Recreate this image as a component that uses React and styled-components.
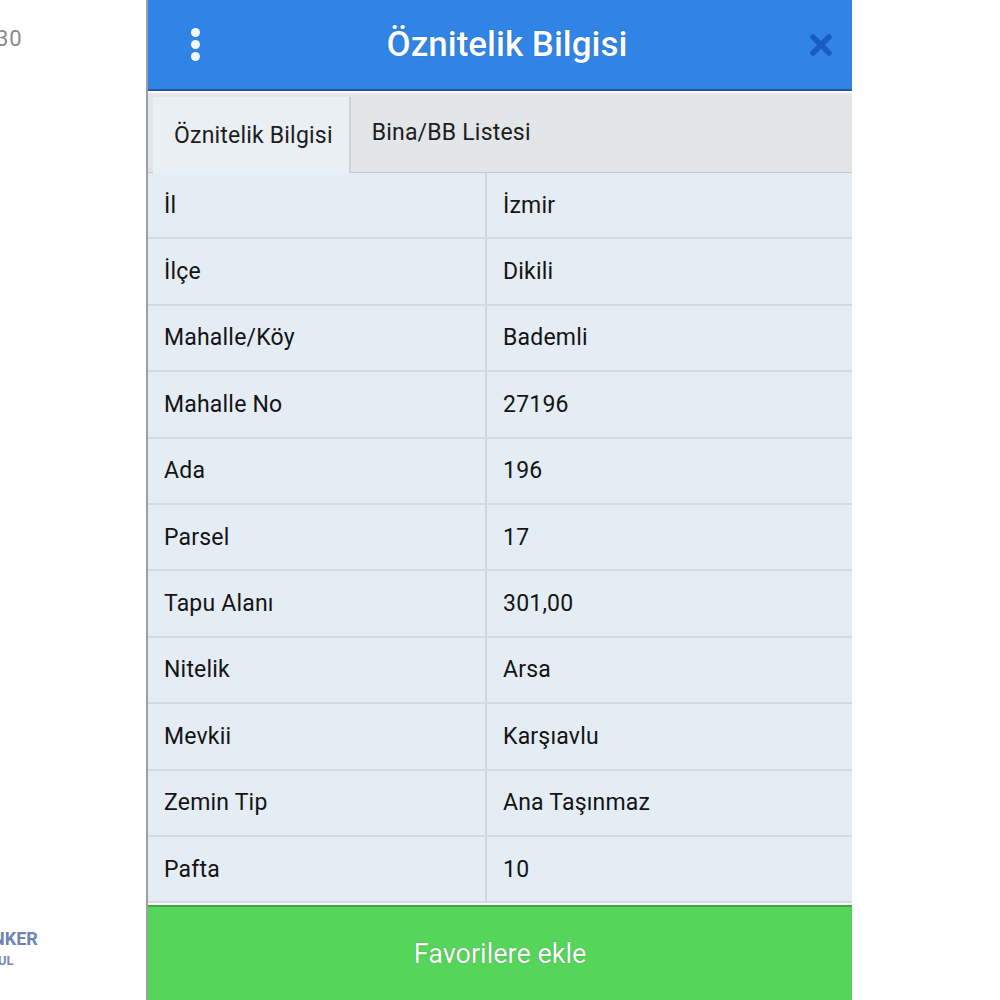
import React from "react";
import styled, { createGlobalStyle } from "styled-components";

const rows = [
  ["İl", "İzmir"],
  ["İlçe", "Dikili"],
  ["Mahalle/Köy", "Bademli"],
  ["Mahalle No", "27196"],
  ["Ada", "196"],
  ["Parsel", "17"],
  ["Tapu Alanı", "301,00"],
  ["Nitelik", "Arsa"],
  ["Mevkii", "Karşıavlu"],
  ["Zemin Tip", "Ana Taşınmaz"],
  ["Pafta", "10"],
];

function App() {
  return (
    <>
      <GlobalStyle />
      <Page>
        <Side>
          <SideTop>30</SideTop>
          <SideBottom>
            <SideBrand>NKER</SideBrand>
            <SideSub>UL</SideSub>
          </SideBottom>
        </Side>

        <Panel>
          <Header>
            <MenuDots>
              <span />
              <span />
              <span />
            </MenuDots>
            <Title>Öznitelik Bilgisi</Title>
            <Close>
              <svg width="26" height="26" viewBox="0 0 26 26">
                <path
                  d="M5 5 L21 21 M21 5 L5 21"
                  stroke="#1b5cc0"
                  strokeWidth="5.5"
                  strokeLinecap="round"
                />
              </svg>
            </Close>
          </Header>

          <Tabs>
            <Tab active>Öznitelik Bilgisi</Tab>
            <Tab>Bina/BB Listesi</Tab>
          </Tabs>

          <Table>
            {rows.map(([label, value]) => (
              <Row key={label}>
                <Cell>{label}</Cell>
                <Cell divider>{value}</Cell>
              </Row>
            ))}
          </Table>

          <FavButton>Favorilere ekle</FavButton>
        </Panel>

        <Rest />
      </Page>
    </>
  );
}

export default App;

const GlobalStyle = createGlobalStyle`
  html, body {
    margin: 0;
    padding: 0;
    background: #fff;
  }
  body {
    font-family: Roboto, "Noto Sans", "Liberation Sans", sans-serif;
  }
`;

const Page = styled.div`
  display: flex;
  width: 1000px;
  height: 1000px;
  overflow: hidden;
`;

const Side = styled.div`
  width: 146px;
  display: flex;
  flex-direction: column;
  justify-content: space-between;
`;

const SideTop = styled.div`
  margin-top: 26px;
  margin-left: -4px;
  font-size: 22px;
  color: #8a8a8a;
  letter-spacing: 1px;
`;

const SideBottom = styled.div`
  margin-bottom: 32px;
  margin-left: -8px;
  display: flex;
  flex-direction: column;
  gap: 4px;
`;

const SideBrand = styled.div`
  font-size: 18px;
  font-weight: 700;
  color: #7183b0;
`;

const SideSub = styled.div`
  font-size: 13px;
  font-weight: 700;
  color: #7a89b3;
  margin-left: 6px;
`;

const Panel = styled.div`
  width: 704px;
  display: flex;
  flex-direction: column;
  border-left: 2px solid #9aa0a6;
  background: #fff;
`;

const Header = styled.div`
  height: 89px;
  background: #2f84e6;
  border-bottom: 2px solid #1f58a6;
  display: flex;
  align-items: center;
  padding: 0 18px 0 40px;
  margin-bottom: 2px;
`;

const MenuDots = styled.div`
  width: 14px;
  display: flex;
  flex-direction: column;
  align-items: center;
  gap: 3px;

  span {
    width: 9px;
    height: 9px;
    border-radius: 50%;
    background: #f2f7ff;
  }
`;

const Title = styled.div`
  flex: 1;
  text-align: center;
  color: #fff;
  font-size: 35px;
  font-weight: 500;
  padding-left: 4px;
  text-shadow: 0 0 1px rgba(0, 0, 0, 0.4);
`;

const Close = styled.div`
  width: 26px;
  height: 26px;
`;

const Tabs = styled.div`
  height: 79px;
  background: #e2e6e9;
  border-bottom: 1px solid #c4c9cd;
  display: flex;
  align-items: flex-end;
  padding-left: 5px;
`;

const Tab = styled.div`
  height: ${(p) => (p.active ? "76px" : "79px")};
  display: flex;
  align-items: center;
  padding: 0 ${(p) => (p.active ? "16px" : "20px")} 0 21px;
  font-size: 23px;
  letter-spacing: 0.2px;
  color: #1d1d1d;
  background: ${(p) => (p.active ? "#e9eff3" : "transparent")};
  border-right: ${(p) => (p.active ? "2px solid #cdd2d6" : "none")};
  margin-bottom: ${(p) => (p.active ? "-1px" : "0")};
`;

const Table = styled.div`
  display: flex;
  flex-direction: column;
  background: #e5edf4;
`;

const Row = styled.div`
  height: 66.4px;
  box-sizing: border-box;
  display: grid;
  grid-template-columns: 337px 1fr;
  border-bottom: 2px solid #d3dae0;
`;

const Cell = styled.div`
  display: flex;
  align-items: center;
  padding-left: 16px;
  font-size: 23px;
  letter-spacing: 0.2px;
  color: #141414;
  border-left: ${(p) => (p.divider ? "2px solid #d0d6db" : "none")};
`;

const FavButton = styled.div`
  flex: 1;
  margin-top: 2px;
  background: #55d65b;
  border-top: 2px solid #3fa847;
  display: flex;
  align-items: center;
  justify-content: center;
  color: #fff;
  font-size: 27px;
  text-shadow: 0 0 1px rgba(0, 0, 0, 0.45);
`;

const Rest = styled.div`
  flex: 1;
  background: #fff;
`;
